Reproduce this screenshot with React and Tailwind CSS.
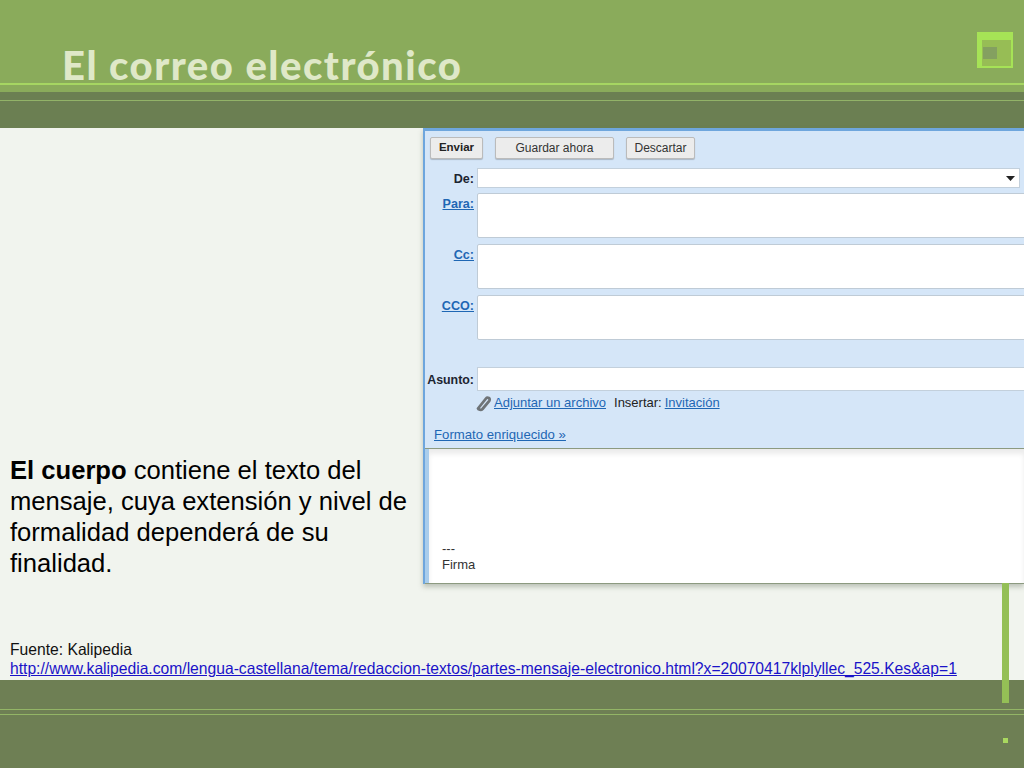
import React from "react";

const Row = ({ label, link, box }) => (
  <div className={`flex ${box}`}>
    <div className="w-[52px] shrink-0 text-right text-[12.6px] leading-[22px] font-bold pr-[3px] whitespace-nowrap">
      {link ? (
        <span className="text-[#1f67b4] underline">{label}</span>
      ) : (
        <span className="text-[#1c2430]">{label}</span>
      )}
    </div>
    <div className="flex-1 bg-white border border-[#bfcbd6] rounded-[2px] mr-[-10px]" />
  </div>
);

const Paperclip = () => (
  <svg width="18" height="18" viewBox="0 0 18 18" className="shrink-0">
    <path
      d="M3 14.5 L11 4.5 C12.5 2.6 15.8 4.4 14.3 6.8 L7.5 15 C6 16.6 3.2 15.4 3 14.5 Z"
      fill="none"
      stroke="#6f7478"
      strokeWidth="2.8"
      strokeLinejoin="round"
    />
  </svg>
);

const btn = "h-[22px] flex items-center justify-center bg-[#ececec] border border-[#bbbbbb] rounded-[2px] shadow-[0_1px_1px_rgba(0,0,0,0.2)]";

const ComposeShot = () => (
  <div className="w-[601px] h-[456px] shrink-0 bg-[#d5e6f8] border-t-[3px] border-l-[2px] border-[#6ea6dd] overflow-hidden font-['Liberation_Sans',sans-serif] flex flex-col relative shadow-[0_3px_5px_rgba(90,100,80,0.35)]">
    <div className="flex gap-[12px] pl-[5px] pt-[6px] text-[12px]">
      <div className={`w-[53px] text-[11.5px] font-bold text-[#222] ${btn}`}>Enviar</div>
      <div className={`w-[119px] text-[#333] ${btn}`}>Guardar ahora</div>
      <div className={`w-[69px] text-[#333] ${btn}`}>Descartar</div>
    </div>
    <div className="flex mt-[9px] h-[20px]">
      <div className="w-[52px] text-right text-[12.6px] leading-[22px] font-bold text-[#1c2430] pr-[3px]">De:</div>
      <div className="w-[543px] bg-white border border-[#c3d0dc] flex items-center justify-end pr-[4px]">
        <svg width="9" height="5" viewBox="0 0 9 5"><path d="M0 0 H9 L4.5 5 Z" fill="#222" /></svg>
      </div>
    </div>
    <Row label="Para:" link box="h-[45px] mt-[5px]" />
    <Row label="Cc:" link box="h-[45px] mt-[6px]" />
    <Row label="CCO:" link box="h-[45px] mt-[6px]" />
    <div className="flex h-[24px] mt-[27px]">
      <div className="w-[52px] text-right text-[12.4px] leading-[26px] font-bold text-[#1c2430] pr-[3px] whitespace-nowrap">Asunto:</div>
      <div className="flex-1 bg-white border border-[#c3d0dc] mr-[-10px]" />
    </div>
    <div className="flex items-center h-[18px] mt-[3px] pl-[50px] text-[13px]">
      <Paperclip />
      <span className="text-[#1f67b4] underline ml-[1px]">Adjuntar un archivo</span>
      <span className="text-[#222] ml-[8px]">Insertar:</span>
      <span className="text-[#1f67b4] underline ml-[3px]">Invitación</span>
    </div>
    <div className="h-[16px] mt-[14px] pl-[9px] text-[13.2px] leading-[17px] text-[#1f67b4]">
      <span className="underline">Formato enriquecido »</span>
    </div>
    <div className="flex-1 mt-[6px] ml-[-2px] bg-white border-t border-b border-[#8c9a80] border-l-[2px] border-l-[#6f8a8c] flex flex-col">
      <div className="flex-1 border-l-[4px] border-[#a9cdec] shadow-[inset_0_5px_5px_rgba(0,0,0,0.08)] pl-[13px] pt-[92px] text-[13px] leading-[16px] text-[#333]">
        <div>---</div>
        <div>Firma</div>
      </div>
    </div>
  </div>
);

export default function App() {
  return (
    <div className="w-[1024px] h-[768px] relative overflow-hidden flex flex-col bg-[#f1f4ee] font-['Liberation_Sans',sans-serif]">
      <header className="h-[128px] shrink-0 bg-[#6b7f52] flex flex-col">
        <div className="h-[92px] bg-[#8aab5b] relative">
          <div className="flex justify-between pl-[62px] pr-[11px]">
            <h1 className="mt-[40px] text-[40px] leading-[50px] font-black text-[#dfe8c8] tracking-[1.5px] font-['Lato',sans-serif] whitespace-nowrap">
              El correo electrónico
            </h1>
            <div className="mt-[32px] w-[36px] h-[36px] bg-[#a6e356] pl-[5px] pt-[8px]">
              <div className="w-[29px] h-[26px] bg-[#97bd55] pl-[1px] pt-[7px]">
                <div className="w-[14px] h-[12px] bg-[#84a060]" />
              </div>
            </div>
          </div>
          <div className="absolute left-0 right-0 top-[83px] h-[2px] bg-[#a6d662]" />
        </div>
        <div className="h-px mt-[8px] bg-[#92b368]" />
      </header>

      <main className="flex-1 flex flex-col">
        <div className="flex">
          <div className="w-[423px] shrink-0 flex flex-col justify-end pl-[10px] pb-[5px] pr-[10px]">
            <p className="text-[25.6px] leading-[31px] text-black">
              <b>El cuerpo</b> contiene el texto del mensaje, cuya extensión y nivel de formalidad dependerá de su finalidad.
            </p>
          </div>
          <ComposeShot />
        </div>
        <div className="pl-[10px] mt-[56px] text-[15.66px] leading-[19px] text-[#111] whitespace-nowrap">
          <div>Fuente: Kalipedia</div>
          <div className="text-[#1a12c8] underline">
            http://www.kalipedia.com/lengua-castellana/tema/redaccion-textos/partes-mensaje-electronico.html?x=20070417klplyllec_525.Kes&amp;ap=1
          </div>
        </div>
      </main>

      <footer className="h-[88px] shrink-0 bg-[#6e7f54] flex flex-col pt-[29px]">
        <div className="h-px bg-[#93b566]" />
        <div className="h-px mt-[4px] bg-[#93b566]" />
      </footer>

      <div className="absolute left-[1002px] top-[583px] w-[7px] h-[120px] bg-[#94bf56]" />
      <div className="absolute left-[1003px] top-[738px] w-[5px] h-[5px] bg-[#a9d85f]" />
    </div>
  );
}
